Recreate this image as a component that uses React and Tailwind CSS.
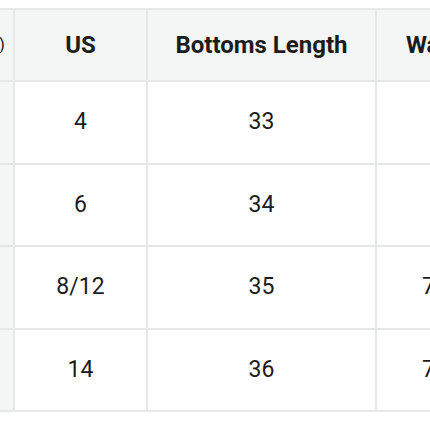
import React from 'react';

const rows = [
  { size: 'XS', us: '4', length: '33', waist: '66' },
  { size: 'S', us: '6', length: '34', waist: '68' },
  { size: 'M', us: '8/12', length: '35', waist: '72-74' },
  { size: 'L', us: '14', length: '36', waist: '76-78' },
];

const cell = 'flex items-center justify-center border-r-2 border-b-2 border-[#e6e7e7]';

export default function App() {
  return (
    <div className="w-[430px] h-[430px] overflow-hidden bg-white pt-[8px] text-[#1c1c1c]" style={{ fontFamily: 'Roboto, "Liberation Sans", sans-serif' }}>
      <div className="ml-[-105px] w-[632px] grid grid-cols-[120px_133px_229px_150px] border-t-2 border-[#e6e7e7]">
        {/* header */}
        <div className={`${cell} h-[72px] bg-[#f4f5f5] !justify-end pr-[8px] text-[17px]`}>Size (cm)</div>
        <div className={`${cell} h-[72px] bg-[#f4f5f5] text-[24px] font-bold`}>US</div>
        <div className={`${cell} h-[72px] bg-[#f4f5f5] text-[24px] font-bold`}>Bottoms Length</div>
        <div className={`${cell} h-[72px] bg-[#f4f5f5] !justify-start pl-[29px] text-[24px] font-bold`}>Waist</div>

        {rows.map((r) => (
          <React.Fragment key={r.us}>
            <div className={`${cell} h-[82.5px] bg-[#f4f5f5] text-[23px]`}>{r.size}</div>
            <div className={`${cell} h-[82.5px] text-[23px]`}>{r.us}</div>
            <div className={`${cell} h-[82.5px] text-[23px]`}>{r.length}</div>
            <div className={`${cell} h-[82.5px] text-[23px]`}>{r.waist}</div>
          </React.Fragment>
        ))}
      </div>
    </div>
  );
}
